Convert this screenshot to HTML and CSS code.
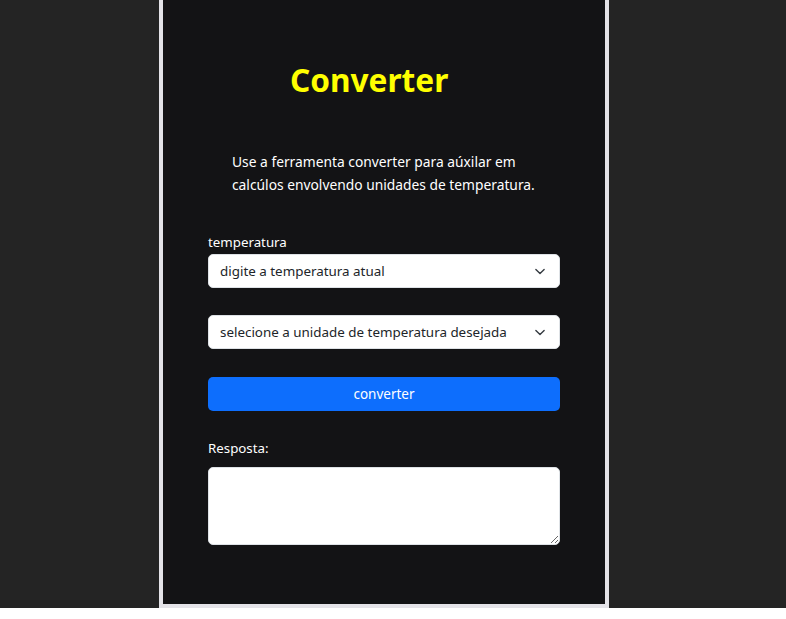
FILE: index.html
```html
<!DOCTYPE html>
<html lang="pt-BR">
<head>
<meta charset="utf-8">
<title>Converter</title>
<link rel="stylesheet" href="styles.css">
</head>
<body>
<div class="page">
  <main class="card">
    <h1 class="title">Converter</h1>
    <p class="intro">Use a ferramenta converter para aúxilar em calcúlos envolvendo unidades de temperatura.</p>
    <form class="form">
      <label class="label" for="temp">temperatura</label>
      <div class="select" id="temp">
        <span>digite a temperatura atual</span>
        <svg class="chev" viewBox="0 0 16 16" width="14" height="11"><path d="m2 5 6 6 6-6" fill="none" stroke="#343a40" stroke-width="2" stroke-linecap="round" stroke-linejoin="round"/></svg>
      </div>
      <div class="select second">
        <span>selecione a unidade de temperatura desejada</span>
        <svg class="chev" viewBox="0 0 16 16" width="14" height="11"><path d="m2 5 6 6 6-6" fill="none" stroke="#343a40" stroke-width="2" stroke-linecap="round" stroke-linejoin="round"/></svg>
      </div>
      <button type="button" class="btn">converter</button>
      <label class="label answer-label" for="resp">Resposta:</label>
      <textarea class="answer" id="resp"></textarea>
    </form>
  </main>
</div>
</body>
</html>
```
FILE: styles.css
```css
* { box-sizing: border-box; }
html, body { margin: 0; padding: 0; background: #ffffff; }
body {
  font-family: "Noto Sans", "Open Sans", sans-serif;
  font-size: 14.4px;
  color: #ffffff;
}
.page {
  background: #242424;
  height: 608px;
  display: flex;
  justify-content: center;
  padding-right: 18px;
}
.card {
  width: 450px;
  background: #131315;
  border: 4px solid #e4e3e8;
  border-top: none;
  height: 608px;
  padding: 0 45px;
}
.title {
  margin: 0;
  padding-top: 58px;
  padding-left: 82px;
  font-size: 31.6px;
  font-weight: 700;
  line-height: 44px;
  color: #ffff00;
}
.intro {
  margin: 48px 0 0 24px;
  width: 310px;
  font-size: 13.8px;
  line-height: 23px;
}
.form {
  display: flex;
  flex-direction: column;
  margin-top: 36px;
}
.label {
  display: block;
  font-size: 13.3px;
  line-height: 21px;
  height: 22px;
}
.select {
  height: 34px;
  background: #ffffff;
  border: 1px solid #dee2e6;
  border-radius: 5px;
  display: flex;
  align-items: center;
  justify-content: space-between;
  padding: 0 12px 0 11px;
  color: #212529;
  font-size: 13.4px;
}
.chev { display: block; }
.second { margin-top: 27px; }
.btn {
  margin-top: 28px;
  height: 34px;
  border: none;
  border-radius: 5px;
  background: #0d6efd;
  color: #ffffff;
  font-family: inherit;
  font-size: 13.5px;
}
.answer-label { margin-top: 27px; }
.answer {
  margin-top: 7px;
  height: 78px;
  border: 1px solid #dee2e6;
  border-radius: 5px;
  background: #ffffff;
  font-family: inherit;
}
```
